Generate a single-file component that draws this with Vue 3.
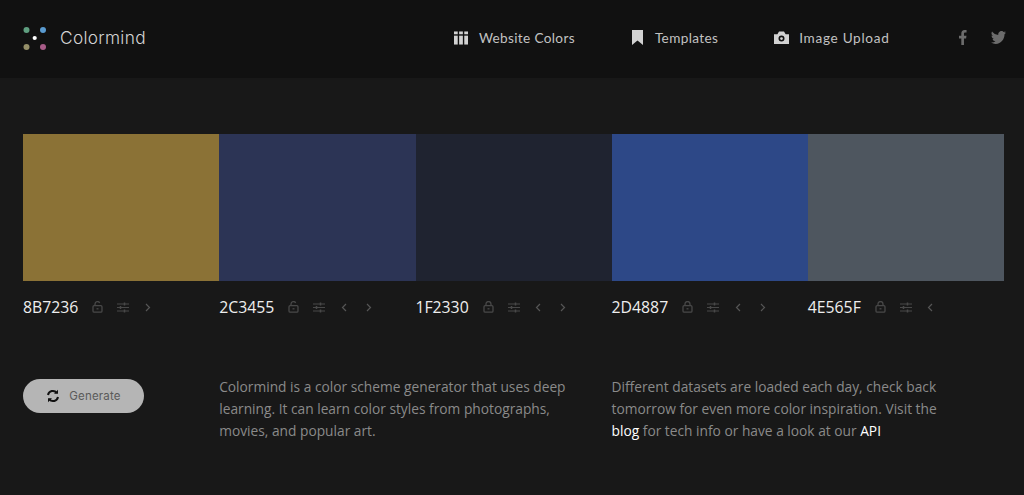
<script setup>
const swatches = [
  { hex: '8B7236', color: '#8b7236', left: false, right: true },
  { hex: '2C3455', color: '#2c3455', left: true, right: true },
  { hex: '1F2330', color: '#1f2330', left: true, right: true, locked: true },
  { hex: '2D4887', color: '#2d4887', left: true, right: true, locked: true },
  { hex: '4E565F', color: '#4e565f', left: true, right: false, locked: true }
]
</script>

<template>
  <div class="page">
    <header class="top">
      <a class="brand">
        <svg class="logo" width="24" height="26" viewBox="0 0 24 26">
          <circle cx="3.500" cy="4" r="3" fill="#5f9f80" />
          <circle cx="20" cy="4" r="3" fill="#5a9bd0" />
          <circle cx="11.700" cy="12" r="2.100" fill="#fff" />
          <circle cx="3.500" cy="21" r="3" fill="#958f68" />
          <circle cx="20" cy="21" r="3" fill="#a85c88" />
        </svg>
        <span class="brand-name">Colormind</span>
      </a>
      <nav class="nav">
        <a class="nav-item first">
          <svg width="14" height="14" viewBox="0 0 15 14" fill="#d2d2d2">
            <rect x="0" y="0" width="4" height="3" /><rect x="5.500" y="0" width="4" height="3" /><rect x="11" y="0" width="4" height="3" />
            <rect x="0" y="4.500" width="4" height="9.500" /><rect x="5.500" y="4.500" width="4" height="9.500" /><rect x="11" y="4.500" width="4" height="9.500" />
          </svg>
          <span>Website Colors</span>
        </a>
        <a class="nav-item second">
          <svg width="11" height="15" viewBox="0 0 11 15" fill="#d2d2d2"><path d="M0 0h11v15L5.500 10.600 0 15z" /></svg>
          <span>Templates</span>
        </a>
        <a class="nav-item third">
          <svg width="15" height="13" viewBox="0 0 15 13" fill="#d2d2d2">
            <path fill-rule="evenodd" d="M0 3.200h3.400L5 .4h5l1.600 2.800H15V13H0zM7.500 4.600a3 3 0 1 0 0 6 3 3 0 0 0 0-6zM7.500 6.200a1.400 1.400 0 1 1 0 2.800 1.400 1.400 0 0 1 0-2.800z" />
          </svg>
          <span>Image Upload</span>
        </a>
      </nav>
      <div class="social">
        <svg width="8" height="15" viewBox="0 0 9 15" preserveAspectRatio="none" fill="#6c6c6c"><path d="M2.600 15V8.400H0V5.700h2.600V3.600C2.600 1.200 4 0 6.200 0c1 0 1.900.1 2.300.1v2.500H7C5.800 2.600 5.600 3.200 5.600 4v1.700h2.800l-.4 2.700H5.600V15z" /></svg>
        <svg width="15" height="13" viewBox="0 0 16 13" preserveAspectRatio="none" fill="#6c6c6c"><path d="M16 1.500c-.6.3-1.200.4-1.900.5.700-.4 1.200-1 1.400-1.800-.6.400-1.300.7-2.100.8A3.300 3.300 0 0 0 7.800 4C5.100 3.900 2.700 2.600 1.100.6a3.300 3.300 0 0 0 1 4.400c-.5 0-1-.2-1.500-.4 0 1.600 1.100 3 2.600 3.300-.5.100-1 .1-1.500 0 .4 1.300 1.600 2.300 3.100 2.300A6.600 6.600 0 0 1 0 11.500 9.300 9.300 0 0 0 5 13c6 0 9.400-5 9.400-9.400v-.4c.6-.5 1.200-1 1.600-1.700z" /></svg>
      </div>
    </header>

    <main class="main">
      <section class="swatches">
        <div v-for="s in swatches" :key="s.hex" class="swatch" :style="{ background: s.color }"></div>
      </section>

      <section class="controls">
        <div v-for="s in swatches" :key="s.hex" class="control">
          <span class="hex">{{ s.hex }}</span>
          <svg width="11" height="12" viewBox="0 0 11 12" fill="none" stroke="#484848" stroke-width="1.300">
            <rect x="1" y="4.600" width="9" height="6.600" rx="1.200" />
            <path v-if="s.locked" d="M3 4.600V3a2.500 2.500 0 0 1 5 0v1.600" />
            <path v-else d="M3 4.600V3a2.500 2.500 0 0 1 4.700-1.100" />
            <path d="M4.500 7.800h2" />
          </svg>
          <svg class="ic-2" width="12" height="11" viewBox="0 0 12 11" fill="none" stroke="#484848" stroke-width="1.200">
            <path d="M0 2h12M0 5.500h12M0 9h12" />
            <path d="M7.500.5v3M3.500 4v3M7.500 7.500v3" stroke-width="1.500" />
          </svg>
          <svg v-if="s.left" class="ic-3" width="6" height="9" viewBox="0 0 6 9" fill="none" stroke="#565656" stroke-width="1.200"><path d="M5 1 1.500 4.500 5 8" /></svg>
          <svg v-if="s.right" :class="s.left ? 'ic-4' : 'ic-3'" width="6" height="9" viewBox="0 0 6 9" fill="none" stroke="#565656" stroke-width="1.200"><path d="M1 1l3.500 3.500L1 8" /></svg>
        </div>
      </section>

      <section class="bottom">
        <div class="gen-cell">
          <button class="generate">
            <svg width="14" height="14" viewBox="0 0 14 14" fill="none" stroke="#111" stroke-width="2">
              <path d="M2 6a5 5 0 0 1 8.800-2.200M12 8a5 5 0 0 1-8.800 2.200" />
              <path d="M12 .8v4H8M2 13.200v-4h4" fill="#111" stroke="none" />
            </svg>
            <span>Generate</span>
          </button>
        </div>
        <p class="copy">Colormind is a color scheme generator that uses deep learning. It can learn color styles from photographs, movies, and popular art.</p>
        <p class="copy">Different datasets are loaded each day, check back tomorrow for even more color inspiration. Visit the <a>blog</a> for tech info or have a look at our <a>API</a></p>
      </section>
    </main>
  </div>
</template>

<style>
html, body { margin: 0; background: #181818; }
</style>

<style scoped>
.page { width: 1024px; height: 495px; overflow: hidden; background: #181818; font-family: "Open Sans", sans-serif; }
.top { height: 78px; box-sizing: border-box; padding: 0 18px 3px 23px; background: #111; display: flex; align-items: center; }
.brand { display: flex; align-items: center; gap: 13px; }
.brand-name { font-family: Inter, sans-serif; font-weight: 300; font-size: 17.300px; letter-spacing: .3px; color: #d4d4d4; }
.logo { margin-top: 3px; }
.nav { display: flex; align-items: center; margin-left: 308px; }
.nav-item { display: flex; align-items: center; gap: 11px; font-family: Lato, sans-serif; font-size: 13.600px; letter-spacing: .35px; color: #c2c2c2; }
.second { margin-left: 57px; gap: 12px; }
.third { margin-left: 56px; gap: 10px; letter-spacing: .7px; }
.social { margin-left: auto; display: flex; align-items: center; gap: 24px; }
.main { padding: 56px 20px 0 23.200px; }
.swatches, .controls, .bottom { display: grid; grid-template-columns: repeat(5, 196.200px); }
.swatch { height: 147px; }
.controls { margin-top: 15px; margin-left: -0.200px; height: 22px; }
.control { display: flex; align-items: center; }
.hex { color: #eee; font-size: 15.800px; margin-right: 14px; }
.ic-2 { margin-left: 14px; }
.ic-3 { margin-left: 15.500px; }
.ic-4 { margin-left: 19px; }
.bottom { margin-top: 58px; margin-left: -0.200px; }
.gen-cell { padding-top: 3px; }
.generate { width: 121px; height: 34px; border: 0; border-radius: 17px; background: #b5b5b5; display: flex; align-items: center; justify-content: center; gap: 9px; padding: 0; font-family: Inter, sans-serif; font-size: 11.500px; letter-spacing: .2px; color: #5a5a5a; }
.copy { grid-column: span 2; margin: 0; font-size: 13.750px; line-height: 22px; color: #8a8a8a; width: 350px; }
.copy a { color: #fff; }
</style>
